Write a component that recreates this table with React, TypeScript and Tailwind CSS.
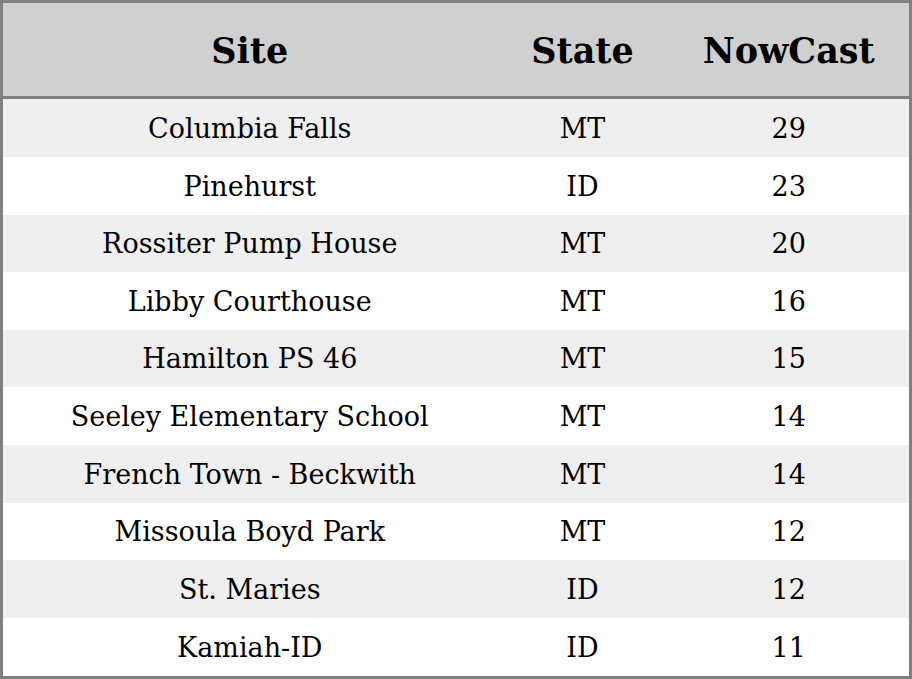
const ROWS = [
  { site: "Columbia Falls", state: "MT", nowcast: 29 },
  { site: "Pinehurst", state: "ID", nowcast: 23 },
  { site: "Rossiter Pump House", state: "MT", nowcast: 20 },
  { site: "Libby Courthouse", state: "MT", nowcast: 16 },
  { site: "Hamilton PS 46", state: "MT", nowcast: 15 },
  { site: "Seeley Elementary School", state: "MT", nowcast: 14 },
  { site: "French Town - Beckwith", state: "MT", nowcast: 14 },
  { site: "Missoula Boyd Park", state: "MT", nowcast: 12 },
  { site: "St. Maries", state: "ID", nowcast: 12 },
  { site: "Kamiah-ID", state: "ID", nowcast: 11 },
]

export default function App() {
  return (
    <div className="w-[912px] h-[679px] bg-white font-['DejaVu_Serif',serif] text-black">
      <table className="w-full h-full border-[3px] border-[#808080] border-collapse table-fixed">
        <colgroup>
          <col className="w-[495px]" />
          <col className="w-[172px]" />
          <col />
        </colgroup>
        <thead>
          <tr className="h-[96px] bg-[#d0d0d0] border-b-[3px] border-[#808080]">
            <th className="pt-[3px] text-[35px] font-bold text-center">Site</th>
            <th className="pt-[3px] text-[35px] font-bold text-center">State</th>
            <th className="pt-[3px] text-[35px] font-bold text-center">NowCast</th>
          </tr>
        </thead>
        <tbody>
          {ROWS.map((r, i) => (
            <tr key={i} className={i % 2 === 0 ? "bg-[#efefef]" : "bg-white"}>
              <td className="pt-[2px] text-[27px] text-center">{r.site}</td>
              <td className="pt-[2px] text-[27px] text-center">{r.state}</td>
              <td className="pt-[2px] text-[27px] text-center">{r.nowcast}</td>
            </tr>
          ))}
        </tbody>
      </table>
    </div>
  )
}
